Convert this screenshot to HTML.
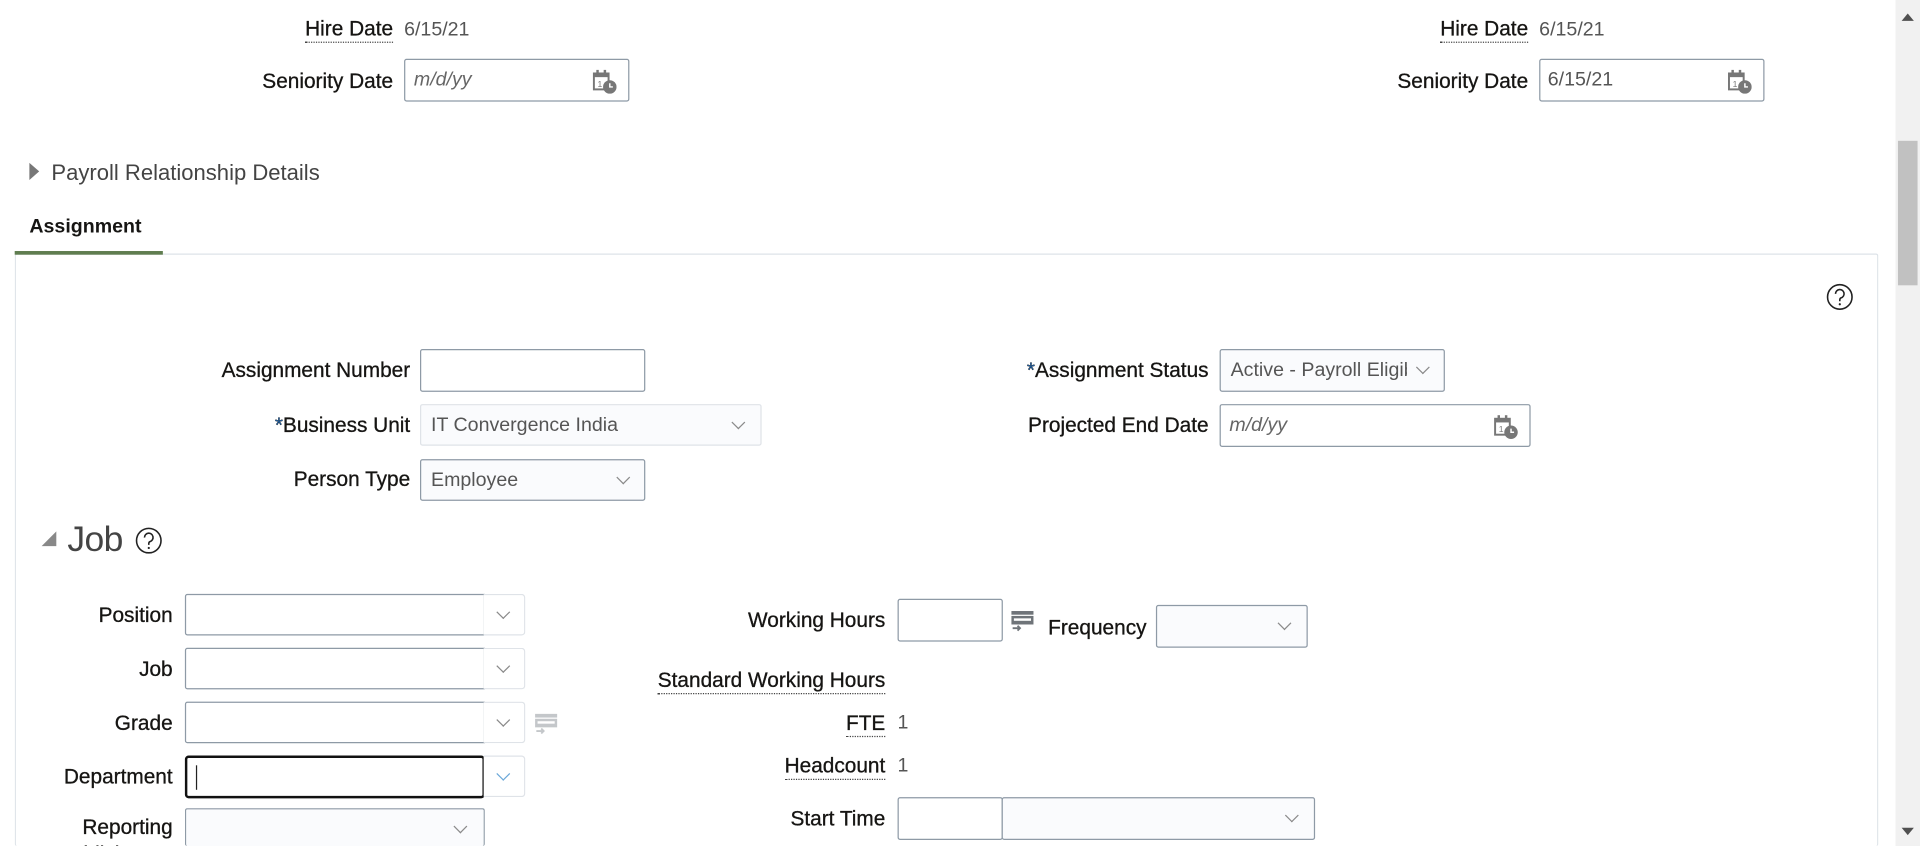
<!DOCTYPE html>
<html><head><meta charset="utf-8"><style>
html,body{margin:0;padding:0;background:#fff;overflow:hidden;width:1920px;height:846px}
#w{position:absolute;left:0;top:0;width:1568px;height:691px;overflow:hidden;transform:scale(1.22449);transform-origin:0 0;font-family:"Liberation Sans",sans-serif;color:#161513}
.a{position:absolute;white-space:nowrap}
.lbl{position:absolute;font-size:17px;text-align:right;line-height:20px;color:#161513;white-space:nowrap;-webkit-text-stroke:0.25px #161513}
.dot{border-bottom:1px dotted #444;padding-bottom:1px}
.val{position:absolute;font-size:16px;line-height:20px;color:#555}
.in{position:absolute;box-sizing:border-box;border:1px solid #8e9aa6;border-radius:2px;background:#fff}
.sel{background:#fafbfd}
.ph{position:absolute;left:7px;top:8px;font-size:16px;font-style:italic;color:#666;white-space:nowrap}
.tx{position:absolute;left:8px;top:8px;font-size:16px;color:#555;white-space:nowrap}
.chev{position:absolute;width:7px;height:7px;border-right:1.3px solid #8a8a8a;border-bottom:1.3px solid #8a8a8a;transform:rotate(45deg)}
.cb{position:absolute;box-sizing:border-box;border:1px solid #dfe3e8;border-left:none;border-radius:0 3px 3px 0;background:#fff}
.req{color:#1b5ea5}
</style></head><body><div id="w">

<div class="lbl" style="right:1247px;top:14px"><span class="dot">Hire Date</span></div>
<div class="val" style="left:330px;top:15px">6/15/21</div>
<div class="lbl" style="right:1247px;top:57px">Seniority Date</div>
<div class="in" style="left:330px;top:48px;width:184px;height:35px"><span class="ph">m/d/yy</span>
<svg class="a" style="left:153px;top:8px" width="22" height="20" viewBox="0 0 22 20"><rect x="1" y="3" width="12" height="13" fill="none" stroke="#777" stroke-width="1.6"/><rect x="1" y="3" width="12" height="3" fill="#777"/><rect x="3" y="0" width="2" height="4" fill="#777"/><rect x="9" y="0" width="2" height="4" fill="#777"/><text x="4" y="14" font-size="7" fill="#777" font-family="Liberation Sans">1</text><circle cx="14" cy="14" r="5.5" fill="#777"/><path d="M14 11v3h2.5" stroke="#fff" stroke-width="1.2" fill="none"/></svg></div>

<div class="lbl" style="right:320px;top:14px"><span class="dot">Hire Date</span></div>
<div class="val" style="left:1257px;top:15px">6/15/21</div>
<div class="lbl" style="right:320px;top:57px">Seniority Date</div>
<div class="in" style="left:1257px;top:48px;width:184px;height:35px"><span class="tx" style="left:6px">6/15/21</span>
<svg class="a" style="left:153px;top:8px" width="22" height="20" viewBox="0 0 22 20"><rect x="1" y="3" width="12" height="13" fill="none" stroke="#777" stroke-width="1.6"/><rect x="1" y="3" width="12" height="3" fill="#777"/><rect x="3" y="0" width="2" height="4" fill="#777"/><rect x="9" y="0" width="2" height="4" fill="#777"/><text x="4" y="14" font-size="7" fill="#777" font-family="Liberation Sans">1</text><circle cx="14" cy="14" r="5.5" fill="#777"/><path d="M14 11v3h2.5" stroke="#fff" stroke-width="1.2" fill="none"/></svg></div>

<svg class="a" style="left:23px;top:132px" width="10" height="16"><path d="M1 1L9 8L1 15Z" fill="#777"/></svg>
<div class="a" style="left:42px;top:131px;font-size:18px;color:#444">Payroll Relationship Details</div>

<div class="a" style="left:24px;top:177px;font-size:16px;font-weight:bold;color:#161513">Assignment</div>
<div class="a" style="left:12px;top:207px;width:1522px;height:484px;border:1px solid #dde3e8;border-bottom:none;border-radius:2px;box-sizing:border-box"></div>
<div class="a" style="left:12px;top:205px;width:121px;height:3px;background:#5f7d4f"></div>

<svg class="a" style="left:1491px;top:231px" width="23" height="23" viewBox="0 0 23 23"><circle cx="11.5" cy="11.5" r="10" fill="none" stroke="#222" stroke-width="1.3"/><path d="M8 9a3.5 3.5 0 1 1 4.5 3.3c-.8.3-1 .8-1 1.7v1" fill="none" stroke="#222" stroke-width="1.3"/><circle cx="11.5" cy="17.5" r="0.9" fill="#222"/></svg>

<div class="lbl" style="right:1233px;top:293px">Assignment Number</div>
<div class="in" style="left:343px;top:285px;width:184px;height:35px"></div>
<div class="lbl" style="right:1233px;top:338px"><span class="req">*</span>Business Unit</div>
<div class="in sel" style="left:343px;top:330px;width:279px;height:34px;border-color:#dfe3e8"><span class="tx">IT Convergence India</span><span class="chev" style="left:255px;top:10px"></span></div>
<div class="lbl" style="right:1233px;top:382px">Person Type</div>
<div class="in sel" style="left:343px;top:375px;width:184px;height:34px"><span class="tx">Employee</span><span class="chev" style="left:161px;top:10px"></span></div>

<div class="lbl" style="right:581px;top:293px"><span class="req">*</span>Assignment Status</div>
<div class="in sel" style="left:996px;top:285px;width:184px;height:35px;overflow:hidden"><span class="tx" style="width:144px;overflow:hidden">Active - Payroll Eligible</span><span class="chev" style="left:161px;top:10px"></span></div>
<div class="lbl" style="right:581px;top:338px">Projected End Date</div>
<div class="in" style="left:996px;top:330px;width:254px;height:35px"><span class="ph">m/d/yy</span>
<svg class="a" style="left:223px;top:8px" width="22" height="20" viewBox="0 0 22 20"><rect x="1" y="3" width="12" height="13" fill="none" stroke="#777" stroke-width="1.6"/><rect x="1" y="3" width="12" height="3" fill="#777"/><rect x="3" y="0" width="2" height="4" fill="#777"/><rect x="9" y="0" width="2" height="4" fill="#777"/><text x="4" y="14" font-size="7" fill="#777" font-family="Liberation Sans">1</text><circle cx="14" cy="14" r="5.5" fill="#777"/><path d="M14 11v3h2.5" stroke="#fff" stroke-width="1.2" fill="none"/></svg></div>

<svg class="a" style="left:33px;top:433px" width="14" height="14"><path d="M13 1L13 13L1 13Z" fill="#888"/></svg>
<div class="a" style="left:55px;top:425px;font-size:29px;color:#444;letter-spacing:-0.5px">Job</div>
<svg class="a" style="left:110px;top:430px" width="23" height="23" viewBox="0 0 23 23"><circle cx="11.5" cy="11.5" r="10" fill="none" stroke="#222" stroke-width="1.3"/><path d="M8 9a3.5 3.5 0 1 1 4.5 3.3c-.8.3-1 .8-1 1.7v1" fill="none" stroke="#222" stroke-width="1.3"/><circle cx="11.5" cy="17.5" r="0.9" fill="#222"/></svg>

<div class="lbl" style="right:1427px;top:493px">Position</div>
<div class="in" style="left:151px;top:485px;width:245px;height:34px;border-radius:2px 0 0 2px"></div><div class="cb" style="left:395px;top:485px;width:34px;height:34px"><span class="chev" style="left:12px;top:10px"></span></div>
<div class="lbl" style="right:1427px;top:537px">Job</div>
<div class="in" style="left:151px;top:529px;width:245px;height:34px;border-radius:2px 0 0 2px"></div><div class="cb" style="left:395px;top:529px;width:34px;height:34px"><span class="chev" style="left:12px;top:10px"></span></div>
<div class="lbl" style="right:1427px;top:581px">Grade</div>
<div class="in" style="left:151px;top:573px;width:245px;height:34px;border-radius:2px 0 0 2px"></div><div class="cb" style="left:395px;top:573px;width:34px;height:34px"><span class="chev" style="left:12px;top:10px"></span></div>
<svg class="a" style="left:436px;top:582px" width="20" height="18" viewBox="0 0 20 18"><rect x="1" y="1" width="18" height="3" fill="#c4c7ca"/><rect x="1" y="5" width="18" height="7" fill="#c4c7ca"/><rect x="3" y="7" width="14" height="2" fill="#fff"/><path d="M2 15h6M6 13l2 2-2 2" stroke="#c4c7ca" stroke-width="1.5" fill="none"/></svg>
<div class="lbl" style="right:1427px;top:625px">Department</div>
<div class="in" style="left:151px;top:617px;width:245px;height:35px;border:2px solid #111;border-radius:3px"><span class="a" style="left:7px;top:6px;width:1px;height:20px;background:#222"></span></div><div class="cb" style="left:395px;top:617px;width:34px;height:34px"><span class="chev" style="left:12px;top:10px;border-color:#6aa7d8"></span></div>
<div class="lbl" style="right:1427px;top:665px;height:26px;overflow:hidden;line-height:22px">Reporting<br>Establishment</div>
<div class="in sel" style="left:151px;top:660px;width:245px;height:31px;border-bottom:none"><span class="chev" style="left:220px;top:10px"></span></div>

<div class="lbl" style="right:845px;top:497px">Working Hours</div>
<div class="in" style="left:733px;top:489px;width:86px;height:35px"></div>
<svg class="a" style="left:825px;top:498px" width="20" height="18" viewBox="0 0 20 18"><rect x="1" y="1" width="18" height="3" fill="#6f7479"/><rect x="1" y="5" width="18" height="7" fill="#6f7479"/><rect x="3" y="7" width="14" height="2" fill="#fff"/><path d="M2 15h6M6 13l2 2-2 2" stroke="#6f7479" stroke-width="1.5" fill="none"/></svg>
<div class="lbl" style="left:856px;top:503px">Frequency</div>
<div class="in sel" style="left:944px;top:494px;width:124px;height:35px"><span class="chev" style="left:100px;top:10px"></span></div>
<div class="lbl" style="right:845px;top:546px"><span class="dot">Standard Working Hours</span></div>
<div class="lbl" style="right:845px;top:581px"><span class="dot">FTE</span></div>
<div class="val" style="left:733px;top:581px">1</div>
<div class="lbl" style="right:845px;top:616px"><span class="dot">Headcount</span></div>
<div class="val" style="left:733px;top:616px">1</div>
<div class="lbl" style="right:845px;top:659px">Start Time</div>
<div class="in" style="left:733px;top:651px;width:86px;height:35px"></div>
<div class="in sel" style="left:818px;top:651px;width:256px;height:35px"><span class="chev" style="left:232px;top:10px"></span></div>

<div class="a" style="left:1548px;top:0;width:20px;height:691px;background:#f1f1f1"></div>
<div class="a" style="left:1550px;top:115px;width:16px;height:118px;background:#c1c1c1"></div>
<svg class="a" style="left:1552px;top:9px" width="12" height="10"><path d="M1 8L6 2L11 8Z" fill="#505050"/></svg>
<svg class="a" style="left:1552px;top:674px" width="12" height="10"><path d="M1 2L6 8L11 2Z" fill="#505050"/></svg>
</div></body></html>
